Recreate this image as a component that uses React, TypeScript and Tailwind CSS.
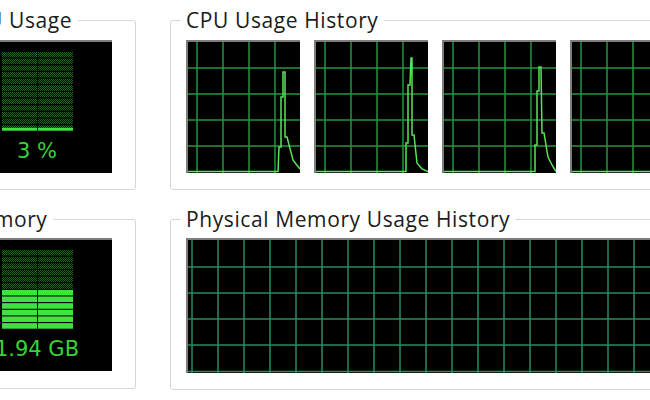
import React from 'react';

const cpuTraces = [
  '0,131.5 92,131.5 93,107 95,107 95,57 97,57 97,32 99,32 99,97 101,97 107,120 110,124 114,129',
  '0,131.5 92,131.5 92,103 94,103 94,45 96,45 97,18 98,18 98,95 100,95 103,123 108,129 114,131.5',
  '0,131.5 93,131.5 93,105 95,105 95,51 97,51 97,27 99,27 100,93 102,93 106,117 110,125 114,131.5',
  '0,131.5 93,131.5 93,104 95,104 95,50 97,50 97,26 99,26 100,94 102,94 106,118 114,131.5',
];

function Meter({ id, fill, label }: { id: string; fill: number; label: string }) {
  const segs = Array.from({ length: 12 }, (_, i) => 12 + i * 6.65);
  const top = 91 - fill * 79;
  const cols = [40, 76];

  return (
    <div className="flex h-[133px] w-[150px] shrink-0 flex-col items-center border-t-2 border-[#7d7d7d] bg-black">
      <svg width="150" height="97" viewBox="0 2 150 97" className="block">
        <defs>
          <pattern id={id} width="2" height="2" patternUnits="userSpaceOnUse">
            <rect width="1" height="1" fill="#266326" />
            <rect x="1" y="1" width="1" height="1" fill="#266326" />
          </pattern>
          <clipPath id={`${id}-clip`}>
            <rect x="0" y={top} width="150" height={91 - top} />
          </clipPath>
        </defs>
        {cols.map((x) =>
          segs.map((y) => (
            <rect key={`d${x}-${y}`} x={x} y={y} width="35" height="5.5" fill={`url(#${id})`} />
          ))
        )}
        <g clipPath={`url(#${id}-clip)`}>
          {cols.map((x) =>
            segs.map((y) => <rect key={`s${x}-${y}`} x={x} y={y} width="35" height="5.5" fill="#3fe23f" />)
          )}
        </g>
      </svg>
      <div className="font-['DejaVu_Sans',sans-serif] text-[21px] leading-[24px] text-[#36d436]">{label}</div>
    </div>
  );
}

function CpuGraph({ trace }: { trace: string }) {
  return (
    <div className="h-[133px] w-[114px] shrink-0 border-t-2 border-l-2 border-[#7d7d7d] bg-black">
      <svg width="112" height="131" viewBox="2 2 112 131" className="block">
        {[11, 37, 63, 89].map((x) => (
          <line key={x} x1={x} x2={x} y1={0} y2={134} stroke="#25963f" strokeWidth="1.5" />
        ))}
        {[28, 54, 80, 106].map((y) => (
          <line key={y} x1={0} x2={116} y1={y} y2={y} stroke="#25963f" strokeWidth="1.5" />
        ))}
        <polyline points={trace} fill="none" stroke="#58e458" strokeWidth="1.5" />
      </svg>
    </div>
  );
}

function MemoryGraph() {
  const cols = Array.from({ length: 19 }, (_, i) => 6 + i * 26);
  return (
    <div className="h-[135px] w-[498px] shrink-0 border-t-2 border-l-2 border-[#7d7d7d] bg-black">
      <svg width="496" height="133" viewBox="2 2 496 133" className="block">
        {cols.map((x) => (
          <line key={x} x1={x} x2={x} y1={0} y2={136} stroke="#288a60" strokeWidth="1.5" />
        ))}
        {[29, 55, 81, 107, 133.5].map((y) => (
          <line key={y} x1={0} x2={500} y1={y} y2={y} stroke="#288a60" strokeWidth="1.5" />
        ))}
      </svg>
    </div>
  );
}

export default function App() {
  return (
    <div className="h-[400px] w-[650px] overflow-hidden bg-white font-['Open_Sans',sans-serif] text-[#1b1b1b]">
      <div className="-ml-[54px] flex w-[820px] flex-col gap-[17px] pt-[8px]">
        {/* CPU row */}
        <div className="flex items-start gap-[34px]">
          <fieldset className="w-[190px] shrink-0 rounded-[3px] border border-[#d6d6d6] pb-[16px] pl-[15px] pr-[22px] pt-[8px]">
            <legend className="-ml-[8px] px-[6px] text-[21px] leading-[24px] tracking-[0.6px]">CPU Usage</legend>
            <Meter id="cpu-dots" fill={0.04} label="3 %" />
          </fieldset>
          <fieldset className="w-[560px] shrink-0 rounded-[3px] border border-[#d6d6d6] pb-[16px] pl-[15px] pt-[8px]">
            <legend className="-ml-[6px] px-[6px] text-[21px] leading-[24px] tracking-[0.6px]">CPU Usage History</legend>
            <div className="flex gap-[14px]">
              {cpuTraces.map((t, i) => (
                <CpuGraph key={i} trace={t} />
              ))}
            </div>
          </fieldset>
        </div>

        {/* Memory row */}
        <div className="flex items-start gap-[34px]">
          <fieldset className="w-[190px] shrink-0 rounded-[3px] border border-[#d6d6d6] pb-[17px] pl-[15px] pr-[22px] pt-[7px]">
            <legend className="-ml-[6px] px-[6px] text-[21px] leading-[24px] tracking-[0.6px]">Memory</legend>
            <Meter id="mem-dots" fill={0.5} label="1.94 GB" />
          </fieldset>
          <fieldset className="w-[560px] shrink-0 rounded-[3px] border border-[#d6d6d6] pb-[16px] pl-[15px] pt-[7px]">
            <legend className="-ml-[6px] px-[6px] text-[21px] leading-[24px] tracking-[0.6px]">Physical Memory Usage History</legend>
            <MemoryGraph />
          </fieldset>
        </div>
      </div>
    </div>
  );
}
